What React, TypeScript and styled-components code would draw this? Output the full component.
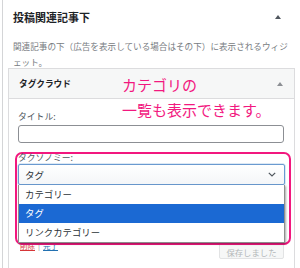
import React from "react";
import styled, { createGlobalStyle } from "styled-components";

const GlobalStyle = createGlobalStyle`
  html, body {
    margin: 0;
    padding: 0;
    background: #ffffff;
  }
  body {
    font-family: "Noto Sans CJK JP", "Noto Sans", sans-serif;
    color: #3c434a;
  }
`;

const ACCENT = "#f2187f";

const Page = styled.div`
  width: 300px;
  height: 268px;
  overflow: hidden;
  padding-left: 2px;
  box-sizing: border-box;
`;

const Panel = styled.div`
  height: 100%;
  border-left: 1px solid #d4d5d7;
  padding: 0 5px;
  box-sizing: border-box;
  position: relative;
`;

const PanelHead = styled.div`
  display: flex;
  align-items: center;
  justify-content: space-between;
  padding: 4px 14px 0 5px;
  height: 26px;
`;

const PanelTitle = styled.h3`
  margin: 0;
  font-size: 11px;
  font-weight: 700;
  line-height: 26px;
  color: #1d2327;
`;

const Arrow = styled.span<{ $tone: string }>`
  width: 0;
  height: 0;
  border-left: 3px solid transparent;
  border-right: 3px solid transparent;
  border-bottom: 4px solid ${(p) => p.$tone};
`;

const Description = styled.p`
  margin: 8px 0 0;
  padding-left: 5px;
  font-size: 8.6px;
  line-height: 16px;
  color: #787c82;
  white-space: nowrap;
`;

const WidgetBox = styled.div`
  margin-top: -2px;
  border: 1px solid #dcdcde;
  background: #ffffff;
  height: 220px;
  position: relative;
`;

const WidgetHead = styled.div`
  display: flex;
  align-items: center;
  justify-content: space-between;
  height: 29px;
  padding: 0 11px 0 10px;
  background: #f6f7f7;
  border-bottom: 1px solid #dcdcde;
`;

const WidgetTitle = styled.span`
  font-size: 8.7px;
  font-weight: 700;
  color: #1d2327;
`;

const WidgetBody = styled.div`
  padding: 0 10px 0 9px;
`;

const Label = styled.div<{ $top: number }>`
  margin-top: ${(p) => p.$top}px;
  font-size: 8.8px;
  line-height: 14px;
  color: #50575e;
`;

const TextInput = styled.div`
  margin-top: 1px;
  height: 18px;
  border: 1px solid #8c8f94;
  border-radius: 3px;
  box-sizing: border-box;
  background: #ffffff;
`;

const Highlight = styled.div`
  position: relative;
  z-index: 1;
  margin: 9px -7px 0 -3px;
  padding: 0 4px 0 1px;
  border: 2px solid ${ACCENT};
  border-radius: 7px;
`;

const SmallLabel = styled.div`
  margin-top: -1px;
  height: 11px;
  font-size: 8.8px;
  line-height: 10px;
  color: #50575e;
`;

const Select = styled.div`
  display: flex;
  align-items: center;
  justify-content: space-between;
  height: 21px;
  padding: 0 8px 0 6px;
  box-sizing: border-box;
  border: 1px solid #6a9ad0;
  border-radius: 2px;
  background: linear-gradient(#ffffff, #f4f6f8);
  box-shadow: 0 0 0 0.5px rgba(80, 140, 200, 0.4);
  font-size: 9.6px;
  color: #2c3338;
`;

const OptionList = styled.div`
  border: 1px solid #8d8d8d;
  border-top: none;
  background: #ffffff;
  box-shadow: 1px 1px 2px rgba(0, 0, 0, 0.35);
`;

const Option = styled.div<{ $active?: boolean }>`
  height: 19px;
  line-height: 19px;
  padding-left: 6px;
  font-size: 9.4px;
  color: ${(p) => (p.$active ? "#ffffff" : "#2c3338")};
  background: ${(p) => (p.$active ? "#1b69d3" : "#ffffff")};
`;

const Actions = styled.div`
  display: flex;
  justify-content: space-between;
  align-items: flex-start;
  margin-top: -2px;
`;

const Links = styled.div`
  margin: -2px 0 0 2px;
  display: flex;
  gap: 3px;
  font-size: 7.5px;
  line-height: 10px;
  color: #8c8f94;
`;

const LinkText = styled.span<{ $tone: string }>`
  color: ${(p) => p.$tone};
  text-decoration: underline;
`;

const SaveButton = styled.div`
  width: 65px;
  height: 16px;
  border: 1px solid #e2e3e4;
  border-radius: 2px;
  box-sizing: border-box;
  background: #f6f7f7;
  font-size: 8.4px;
  line-height: 12px;
  padding-top: 2px;
  text-align: center;
  color: #b4b7ba;
`;

const Note = styled.div`
  position: absolute;
  left: 113px;
  top: 3px;
  font-size: 15px;
  line-height: 25px;
  color: ${ACCENT};
  white-space: nowrap;
  pointer-events: none;
`;

const Chevron = () => (
  <svg width="8" height="5" viewBox="0 0 8 5">
    <polyline points="0.8,0.8 4,4 7.2,0.8" fill="none" stroke="#50575e" strokeWidth="1.2" />
  </svg>
);

const options = ["カテゴリー", "タグ", "リンクカテゴリー"];

export default function App() {
  return (
    <>
      <GlobalStyle />
      <Page>
        <Panel>
          <PanelHead>
            <PanelTitle>投稿関連記事下</PanelTitle>
            <Arrow $tone="#50575e" />
          </PanelHead>
          <Description>
            関連記事の下（広告を表示している場合はその下）に表示されるウィジ
            <br />
            ェット。
          </Description>
          <WidgetBox>
            <WidgetHead>
              <WidgetTitle>タグクラウド</WidgetTitle>
              <Arrow $tone="#8c8f94" />
            </WidgetHead>
            <WidgetBody>
              <Label $top={11}>タイトル:</Label>
              <TextInput />
              <Highlight>
                <SmallLabel>タクソノミー:</SmallLabel>
                <Select>
                  <span>タグ</span>
                  <Chevron />
                </Select>
                <OptionList>
                  {options.map((o) => (
                    <Option key={o} $active={o === "タグ"}>
                      {o}
                    </Option>
                  ))}
                </OptionList>
              </Highlight>
              <Actions>
                <Links>
                  <LinkText $tone="#d63638">削除</LinkText>
                  <span>|</span>
                  <LinkText $tone="#2271b1">完了</LinkText>
                </Links>
                <SaveButton>保存しました</SaveButton>
              </Actions>
            </WidgetBody>
            <Note>
              カテゴリの
              <br />
              一覧も表示できます。
            </Note>
          </WidgetBox>
        </Panel>
      </Page>
    </>
  );
}
